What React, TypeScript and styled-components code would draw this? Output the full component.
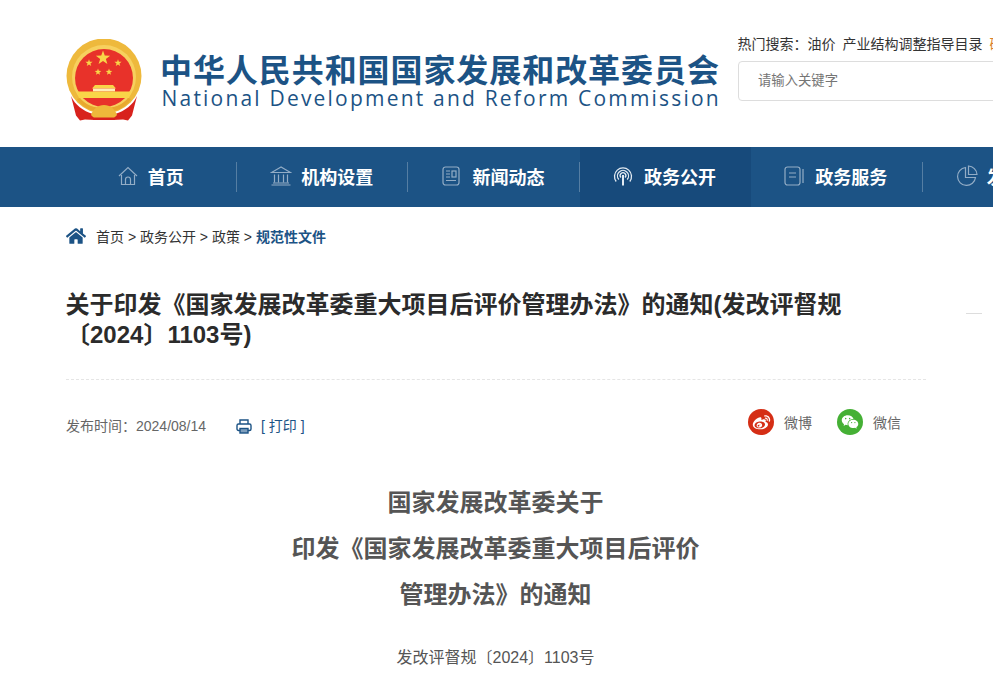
// App.tsx
import React from "react";
import * as styledComponents from "styled-components";
import { FaHome } from "react-icons/fa";
import { RiWeiboFill, RiWechatFill } from "react-icons/ri";

const styled = styledComponents.default;
const { createGlobalStyle } = styledComponents;

const BLUE = "#1c5385";

const Global = createGlobalStyle`
  html, body {
    margin: 0;
    padding: 0;
    background: #fff;
    overflow-x: hidden;
  }
  body {
    font-family: "Liberation Sans", "Noto Sans CJK SC", sans-serif;
    color: #333;
  }
`;

/* --- nav icons, thin outline look --- */

const HomeIcon = () => (
  <svg width="22" height="22" viewBox="0 0 22 22" fill="none" stroke="currentColor" strokeWidth="1.2">
    <path d="M2 11 11 2.5 20 11" />
    <path d="M4.5 10v9.5h13V10" />
    <path d="M8.5 19.5v-5a2.5 2.5 0 0 1 5 0v5" />
  </svg>
);

const BankIcon = () => (
  <svg width="22" height="22" viewBox="0 0 22 22" fill="none" stroke="currentColor" strokeWidth="1.2">
    <path d="M11 2 1.500 7.500h19z" />
    <path d="M4.500 9.500v8M8.500 9.500v8M13.500 9.500v8M17.500 9.500v8" />
    <path d="M1.500 20h19M3 18h16" />
  </svg>
);

const NewsIcon = () => (
  <svg width="18" height="20" viewBox="0 0 18 20" fill="none" stroke="currentColor" strokeWidth="1.2">
    <rect x="1" y="1" width="16" height="18" rx="2.500" />
    <path d="M4 5h4M4 8h4M4 11h4M4 14.500h10" />
    <rect x="10" y="5" width="4" height="6" />
  </svg>
);

const SignalIcon = () => (
  <svg width="20" height="20" viewBox="0 0 20 20" fill="none" stroke="currentColor" strokeWidth="1.3">
    <path d="M3.200 15.500a8.500 8.500 0 1 1 13.600 0" />
    <path d="M5.800 13.500a5.500 5.500 0 1 1 8.400 0" />
    <path d="M8 11.500a2.800 2.800 0 1 1 4 0" />
    <path d="M10 9v10.500" strokeWidth="2" />
  </svg>
);

const BookIcon = () => (
  <svg width="20" height="20" viewBox="0 0 20 20" fill="none" stroke="currentColor" strokeWidth="1.2">
    <rect x="1" y="1" width="15" height="18" rx="2.500" />
    <path d="M5 7h7M5 11h7M19 3v14" />
  </svg>
);

const PieIcon = () => (
  <svg width="22" height="22" viewBox="0 0 22 22" fill="none" stroke="currentColor" strokeWidth="1.2">
    <path d="M9.500 2.500a9 9 0 1 0 10 10h-10z" />
    <path d="M12.500 1a9 9 0 0 1 8.500 8.500h-8.500z" />
  </svg>
);

const PrintIcon = () => (
  <svg width="16" height="15" viewBox="0 0 16 15" fill="none" stroke={BLUE} strokeWidth="1.4">
    <path d="M4 5V1h8v4" />
    <rect x="1" y="5" width="14" height="6.500" rx="1.500" />
    <rect x="4" y="9.500" width="8" height="4.500" fill="#7f9fbd" />
  </svg>
);

const star = (cx: number, cy: number, r: number) => {
  const pts: string[] = [];
  for (let i = 0; i < 10; i++) {
    const rad = i % 2 === 0 ? r : r * 0.4;
    const a = -Math.PI / 2 + (i * Math.PI) / 5;
    pts.push(`${(cx + rad * Math.cos(a)).toFixed(2)},${(cy + rad * Math.sin(a)).toFixed(2)}`);
  }
  return pts.join(" ");
};

const Emblem = () => (
  <svg width="76" height="82" viewBox="0 0 76 82">
    <circle cx="38" cy="37" r="37.500" fill="#eeb93c" />
    <circle cx="38" cy="38" r="32" fill="#f7d05e" />
    <circle cx="38" cy="39" r="29" fill="#e8322a" />
    <polygon points={star(37, 19, 7.500)} fill="#f9d548" />
    <polygon points={star(23, 24, 3.800)} fill="#f9d548" />
    <polygon points={star(52, 24, 3.800)} fill="#f9d548" />
    <polygon points={star(32, 33, 3.500)} fill="#f9d548" />
    <polygon points={star(43, 33, 3.500)} fill="#f9d548" />
    {/* gate and platform */}
    <path d="M29 46h18l3 3.500H26z" fill="#f9d548" />
    <rect x="27" y="49.500" width="22" height="3" fill="#ffeeb8" />
    <path d="M11 52.500h54l-2 6.500H13z" fill="#f9d548" />
    <path d="M14 59c5 7 14 10 24 10s19-3 24-10l3 1c-5 9-16 13-27 13s-22-4-27-13z" fill="#e8a92e" />
    {/* ribbons */}
    <path d="M5 57c4 9 12 15 22 18l2 6-10-.5-5 1-4-5z" fill="#d8221d" />
    <path d="M71 57c-4 9-12 15-22 18l-2 6 10-.5 5 1 4-5z" fill="#d8221d" />
    <path d="M25 76c2-6 7-10 13-10s11 4 13 10l-3 3H28z" fill="#eeb93a" />
    <path d="M27 78.500h22V81H27z" fill="#d8221d" />
  </svg>
);

/* --- data --- */

const NAV = [
  { label: "首页", icon: <HomeIcon /> },
  { label: "机构设置", icon: <BankIcon /> },
  { label: "新闻动态", icon: <NewsIcon /> },
  { label: "政务公开", icon: <SignalIcon />, active: true },
  { label: "政务服务", icon: <BookIcon /> },
  { label: "发改数据", icon: <PieIcon /> },
];

const CRUMBS = ["首页", "政务公开", "政策"];

export default function App() {
  return (
    <Page>
      <Global />
      <Header>
        <EmblemSlot>
          <Emblem />
        </EmblemSlot>
        <Brand>
          <BrandCn>中华人民共和国国家发展和改革委员会</BrandCn>
          <BrandEn>National Development and Reform Commission</BrandEn>
        </Brand>
        <SearchArea>
          <HotRow>
            <span>热门搜索：</span>
            <HotLink>油价</HotLink>
            <HotLink>产业结构调整指导目录</HotLink>
            <HotLink $hot>碳达峰碳中和</HotLink>
          </HotRow>
          <SearchInput placeholder="请输入关键字" />
        </SearchArea>
      </Header>

      <Nav>
        {NAV.map((n) => (
          <NavItem key={n.label} $active={!!n.active}>
            <NavIcon $active={!!n.active}>{n.icon}</NavIcon>
            {n.label}
          </NavItem>
        ))}
      </Nav>

      <Main>
        <Article>
          <Crumbs>
            <CrumbHome>
              <FaHome size={20} />
            </CrumbHome>
            {CRUMBS.map((c) => (
              <span key={c}>{c} &gt; </span>
            ))}
            <CrumbNow>规范性文件</CrumbNow>
          </Crumbs>

          <Title>关于印发《国家发展改革委重大项目后评价管理办法》的通知(发改评督规〔2024〕1103号)</Title>

          <MetaRow>
            <MetaLeft>
              <span>发布时间：2024/08/14</span>
              <PrintLink>
                <PrintIcon />
                [ 打印 ]
              </PrintLink>
            </MetaLeft>
            <Share>
              <ShareItem>
                <ShareDot $color="#d52e15">
                  <RiWeiboFill size={19} />
                </ShareDot>
                微博
              </ShareItem>
              <ShareItem>
                <ShareDot $color="#45b035">
                  <RiWechatFill size={18} />
                </ShareDot>
                微信
              </ShareItem>
            </Share>
          </MetaRow>

          <Body>
            <BodyHead>
              国家发展改革委关于
              <br />
              印发《国家发展改革委重大项目后评价
              <br />
              管理办法》的通知
            </BodyHead>
            <DocNo>发改评督规〔2024〕1103号</DocNo>
          </Body>
        </Article>
        <Aside>
          <AsideLine />
        </Aside>
      </Main>
    </Page>
  );
}

/* --- styles --- */

const Page = styled.div`
  width: 100vw;
  overflow: hidden;
`;

const Header = styled.header`
  display: flex;
  width: 1300px;
  height: 147px;
  padding-left: 66px;
  box-sizing: border-box;
`;

const EmblemSlot = styled.div`
  flex: none;
  width: 76px;
  padding-top: 39px;
`;

const Brand = styled.div`
  flex: none;
  width: 560px;
  margin-left: 18px;
  padding-top: 51px;
  color: ${BLUE};
`;

const BrandCn = styled.div`
  font-family: "Noto Sans CJK SC", sans-serif;
  font-size: 32px;
  font-weight: 700;
  line-height: 35px;
  letter-spacing: 0.93px;
  white-space: nowrap;
`;

const BrandEn = styled.div`
  padding-left: 1.5px;
  font-family: "Open Sans", "Liberation Sans", sans-serif;
  font-size: 21px;
  line-height: 25px;
  letter-spacing: 2.2px;
  white-space: nowrap;
`;

const SearchArea = styled.div`
  flex: none;
  margin-left: 18px;
  padding-top: 35px;
`;

const HotRow = styled.div`
  display: flex;
  gap: 7px;
  margin-left: -0.5px;
  font-size: 14px;
  line-height: 18px;
  color: #333;
  white-space: nowrap;

  & > span:first-child {
    margin-right: -7px;
  }
`;

const HotLink = styled.span<{ $hot?: boolean }>`
  color: ${(p) => (p.$hot ? "#d9822b" : "#333")};
`;

const SearchInput = styled.input`
  display: block;
  width: 300px;
  height: 40px;
  margin-top: 8px;
  padding: 0 19px 2px;
  box-sizing: border-box;
  border: 1px solid #ddd;
  border-radius: 4px;
  outline: none;
  font-family: inherit;
  font-size: 13.333px;
`;

const Nav = styled.nav`
  display: flex;
  width: 1300px;
  height: 60px;
  padding-left: 65.6px;
  box-sizing: border-box;
  background: ${BLUE};
`;

const NavItem = styled.a<{ $active: boolean }>`
  position: relative;
  display: flex;
  flex: none;
  align-items: center;
  justify-content: center;
  gap: 9px;
  width: 171.4px;
  padding: 0 2px 2px 0;
  box-sizing: border-box;
  font-size: 18px;
  font-weight: 700;
  color: #fff;
  background: ${(p) => (p.$active ? "#174a7b" : "transparent")};

  &::after {
    content: "";
    position: absolute;
    top: 15px;
    right: 0;
    width: 1px;
    height: 30px;
    background: ${(p) => (p.$active ? "transparent" : "rgba(255, 255, 255, 0.25)")};
  }
`;

const NavIcon = styled.span<{ $active: boolean }>`
  display: flex;
  width: 22px;
  color: ${(p) => (p.$active ? "#e3ebf2" : "#93adc6")};
`;

const Main = styled.main`
  display: flex;
  width: 1300px;
  padding-left: 66px;
  box-sizing: border-box;
`;

const Article = styled.article`
  flex: none;
  width: 860px;
`;

const Aside = styled.aside`
  flex: none;
  margin-left: 40px;
  padding-top: 106px;
`;

const AsideLine = styled.div`
  width: 16px;
  height: 1px;
  background: #ddd;
`;

const Crumbs = styled.div`
  display: flex;
  align-items: center;
  height: 58px;
  margin-left: -0.5px;
  font-size: 14px;
  color: #333;
  white-space: pre;
`;

const CrumbHome = styled.span`
  display: flex;
  width: 30px;
  margin-left: 0.5px;
  color: ${BLUE};
`;

const CrumbNow = styled.span`
  font-weight: 700;
  color: ${BLUE};
`;

const Title = styled.h1`
  margin: 25px 0 0;
  padding-bottom: 29px;
  border-bottom: 1px dashed #e5e5e5;
  font-size: 24px;
  font-weight: 700;
  line-height: 30px;
  color: #2b2b2b;
  text-indent: -0.5px;
`;

const MetaRow = styled.div`
  display: flex;
  align-items: center;
  justify-content: space-between;
  height: 26px;
  margin-top: 29px;
  padding-right: 25px;
  font-size: 14px;
  color: #666;
`;

const MetaLeft = styled.div`
  display: flex;
  align-items: center;
  gap: 30px;
  padding-top: 5px;
`;

const PrintLink = styled.span`
  display: flex;
  align-items: center;
  gap: 9px;
  padding-top: 1px;
  color: ${BLUE};

  svg {
    margin-top: 3px;
  }
`;

const Share = styled.div`
  display: flex;
  gap: 25px;
`;

const ShareItem = styled.div`
  display: flex;
  align-items: center;
  gap: 10px;
`;

const ShareDot = styled.span<{ $color: string }>`
  display: flex;
  align-items: center;
  justify-content: center;
  width: 26px;
  height: 26px;
  border-radius: 50%;
  background: ${(p) => p.$color};
  color: #fff;
`;

const Body = styled.div`
  margin-top: 45px;
  padding-right: 1px;
  text-align: center;
  color: #555;
`;

const BodyHead = styled.h2`
  margin: 0;
  font-size: 24px;
  font-weight: 700;
  line-height: 46px;
`;

const DocNo = styled.p`
  margin: 26px 0 0;
  font-size: 16px;
  line-height: 28px;
`;
